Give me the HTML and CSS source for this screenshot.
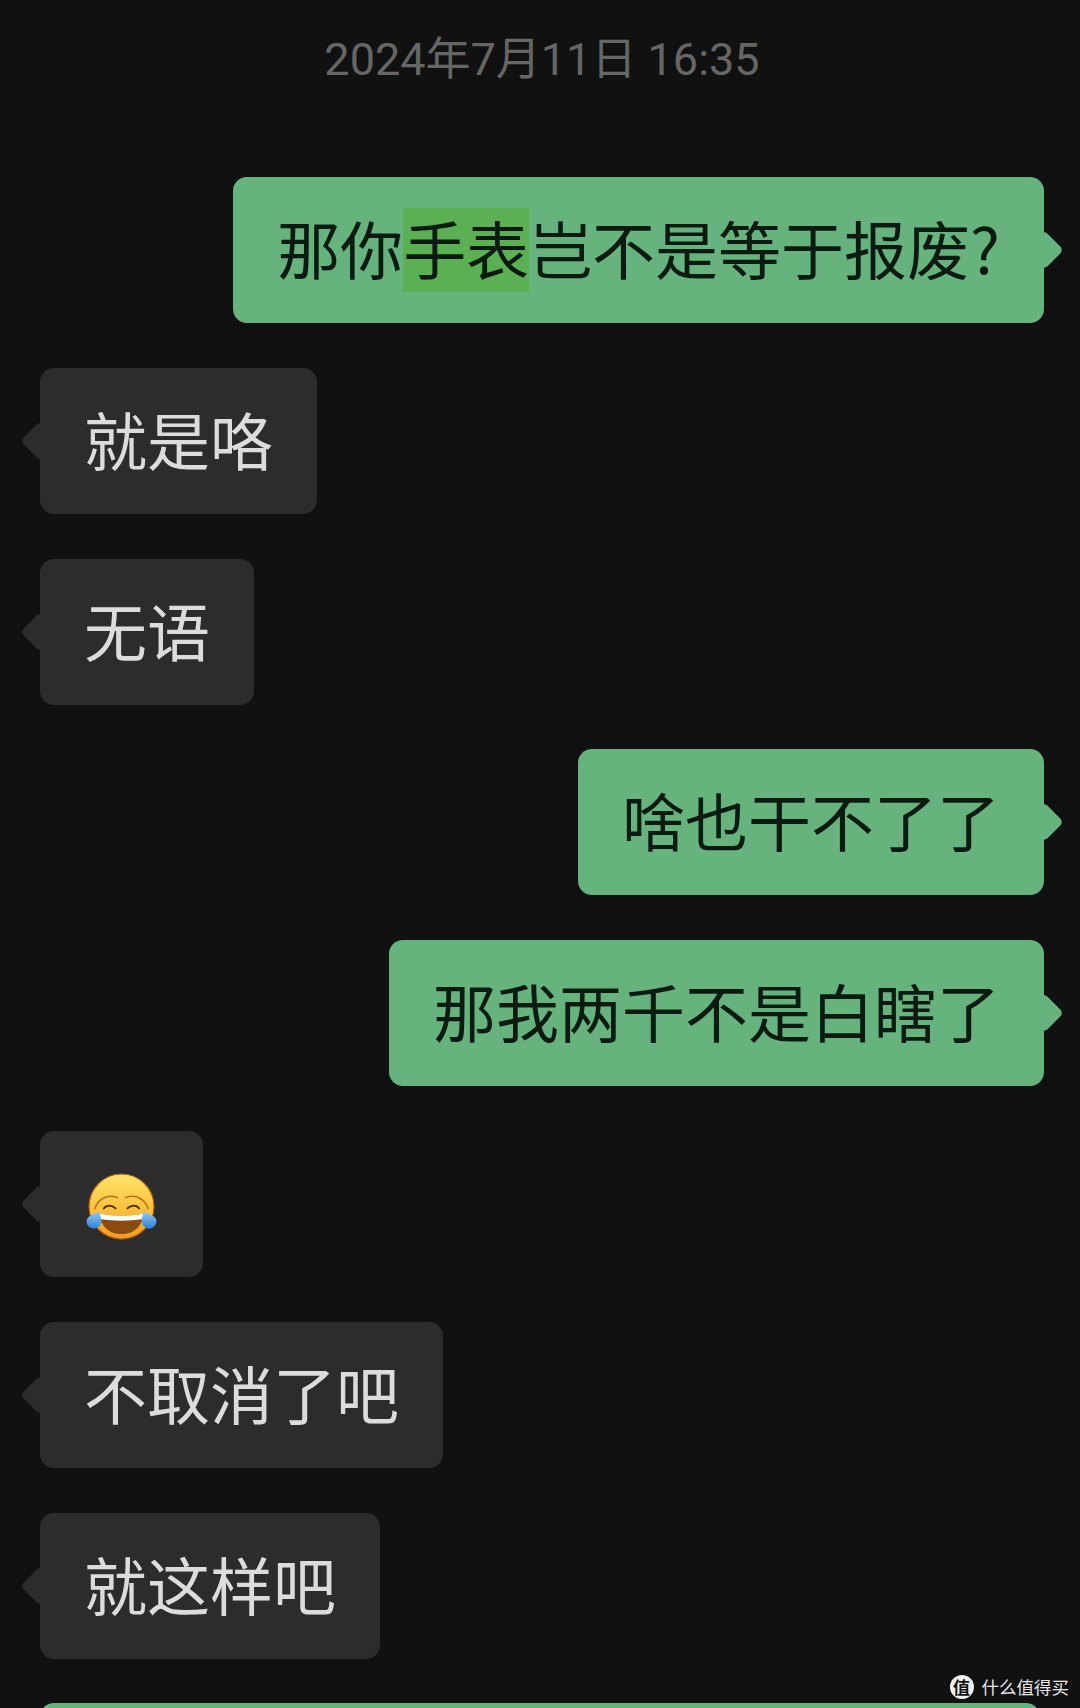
FILE: index.html
```html
<!DOCTYPE html>
<html lang="zh-CN">
<head>
  <meta charset="UTF-8">
  <title>聊天记录</title>
  <link rel="stylesheet" href="styles.css">
</head>
<body>
  <div class="chat">
    <div class="time">2024年7月11日 16:35</div>

    <div class="bubble sent">那你<span class="hl">手表</span>岂不是等于报废?</div>
    <div class="bubble recv">就是咯</div>
    <div class="bubble recv">无语</div>
    <div class="bubble sent">啥也干不了了</div>
    <div class="bubble sent">那我两千不是白瞎了</div>
    <div class="bubble recv">
      <svg class="emoji" viewBox="0 0 72 70">
        <defs>
          <linearGradient id="face" x1="0" y1="0" x2="0" y2="1">
            <stop offset="0" stop-color="#ffe36a"/>
            <stop offset="0.55" stop-color="#fdc13c"/>
            <stop offset="1" stop-color="#f29a1f"/>
          </linearGradient>
          <linearGradient id="tear" x1="0" y1="0" x2="0" y2="1">
            <stop offset="0" stop-color="#8fcdf6"/>
            <stop offset="1" stop-color="#2f7fd8"/>
          </linearGradient>
        </defs>
        <circle cx="36" cy="34" r="33" fill="url(#face)" stroke="#a8560f" stroke-width="1.200"/>
        <!-- brows -->
        <path d="M9 36c3-9 12-15 23-11M63 36c-3-9-12-15-23-11" fill="none" stroke="#b9701a" stroke-width="1.500" stroke-linecap="round"/>
        <!-- closed eyes -->
        <path d="M18 36c3-4 8-4 12 0M42 36c4-4 9-4 12 0" fill="none" stroke="#4a2c12" stroke-width="1.800" stroke-linecap="round"/>
        <!-- mouth -->
        <path d="M14 41c14 3 30 3 44 0c0 12-9 21-22 21s-22-9-22-21z" fill="#8a4a12"/>
        <path d="M14 41c14 3 30 3 44 0c0 2-.3 4-1 6c-14 2-28 2-42 0c-.7-2-1-4-1-6z" fill="#fff"/>
        <!-- tears -->
        <path d="M14 39c.5 5 1.500 7 1.500 10a7.500 7.500 0 0 1-15 0c0-5 8-8 13.500-10z" fill="url(#tear)"/>
        <path d="M58 39c-.5 5-1.500 7-1.500 10a7.500 7.500 0 0 0 15 0c0-5-8-8-13.500-10z" fill="url(#tear)"/>
      </svg>
    </div>
    <div class="bubble recv">不取消了吧</div>
    <div class="bubble recv">就这样吧</div>
    <div class="bubble sent last">&nbsp;</div>
  </div>

  <div class="mark">
    <span class="mark-logo">值</span>
    <span>什么值得买</span>
  </div>
</body>
</html>
```

FILE: styles.css
```css
html, body {
  margin: 0;
  padding: 0;
  height: 1708px;
  overflow: hidden;
  background: #111111;
  font-family: Roboto, "Noto Sans CJK SC", sans-serif;
}
.chat {
  display: flex;
  flex-direction: column;
  gap: 44.8px;
  padding: 0 36px 0 40px;
}
.time {
  height: 132.200px;
  line-height: 120px;
  text-align: center;
  font-size: 45px;
  color: #666666;
}
.bubble {
  position: relative;
  box-sizing: border-box;
  height: 146px;
  line-height: 140px;
  padding: 0 44px;
  border-radius: 14px;
  font-family: "Noto Sans CJK SC", sans-serif;
  font-size: 63px;
  white-space: nowrap;
}
.bubble::after {
  content: "";
  position: absolute;
  top: 59px;
  width: 28px;
  height: 28px;
  border-radius: 5px;
  background: inherit;
  transform: rotate(45deg);
}
.sent {
  align-self: flex-end;
  background: #66b37e;
  color: #0c1b11;
}
.sent::after {
  right: -14px;
}
.recv {
  align-self: flex-start;
  background: #2c2c2c;
  color: #dcdcdc;
}
.recv::after {
  left: -14px;
}
.hl {
  display: inline-block;
  line-height: 78px;
  padding-bottom: 6px;
  background: #5cb054;
}
.emoji {
  display: block;
  width: 71px;
  height: 69px;
  margin: 42px 2px 0;
}
.last {
  width: 1000px;
  margin-right: 4px;
}
.last::after {
  display: none;
}
.mark {
  position: absolute;
  right: 11px;
  bottom: 9px;
  display: flex;
  align-items: center;
  gap: 8px;
  font-family: "Noto Sans CJK SC", sans-serif;
  font-size: 17.500px;
  color: #e6e6e6;
}
.mark-logo {
  width: 24px;
  height: 24px;
  line-height: 24px;
  border-radius: 50%;
  background: #f2f2f2;
  color: #111111;
  text-align: center;
  font-size: 17px;
  font-weight: 700;
}
```
